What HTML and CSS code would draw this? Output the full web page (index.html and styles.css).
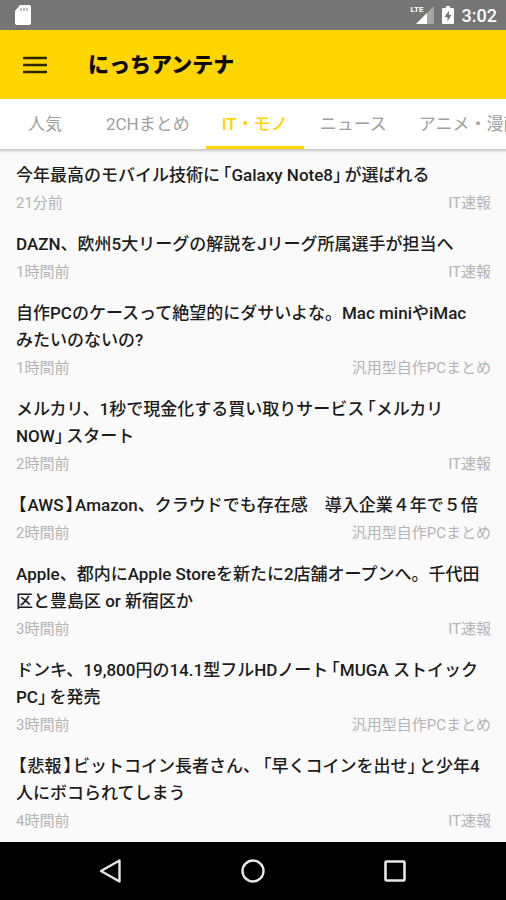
FILE: index.html
```
<!DOCTYPE html>
<html lang="ja">
<head>
  <meta charset="UTF-8" />
  <meta name="viewport" content="width=device-width, initial-scale=1.0"/>
  <title>にっちアンテナ</title>
  <link rel="stylesheet" href="styles.css">
</head>
<body>
  <div class="status-bar">
    <svg class="sd-icon" width="18" height="20" viewBox="0 0 18 20">
      <path d="M6 0h9a2 2 0 0 1 2 2v16a2 2 0 0 1-2 2H3a2 2 0 0 1-2-2V6z" fill="#fff"/>
      <path d="M7 3v3M10 3v3M13 3v3" stroke="#999" stroke-width="1.3"/>
    </svg>
    <div class="status-right">
      <span class="signal">
        <svg width="18" height="18" viewBox="0 0 18 18">
          <path d="M18 0v18H0z" fill="#a6a6a6"/>
          <path d="M11 7v11H0z" fill="#fff"/>
        </svg>
        <span class="lte">LTE</span>
      </span>
      <svg width="12" height="18" viewBox="0 0 12 18">
        <path d="M4 0h4v2h3a1 1 0 0 1 1 1v14a1 1 0 0 1-1 1H1a1 1 0 0 1-1-1V3a1 1 0 0 1 1-1h3z" fill="#fff"/>
        <path d="M7 4.500 2.500 11H5.500V15.500L9.500 9H7z" fill="#757575"/>
      </svg>
      <span class="clock">3:02</span>
    </div>
  </div>

  <header class="app-bar">
    <button type="button" class="menu-btn" aria-label="メニュー">
      <svg width="24" height="18" viewBox="0 0 24 18">
        <path d="M0 2h24M0 9h24M0 16h24" stroke="#2b2500" stroke-width="2.400"/>
      </svg>
    </button>
    <h1>にっちアンテナ</h1>
  </header>

  <nav class="tabs">
    <a href="#popular">人気</a>
    <a href="#2ch">2CHまとめ</a>
    <a href="#it" class="active">IT・モノ</a>
    <a href="#news">ニュース</a>
    <a href="#anime">アニメ・漫画</a>
  </nav>

  <main class="list">
    <article class="item">
      <h2><a href="#1">今年最高のモバイル技術に<span class="open">「</span>Galaxy Note8<span class="close">」</span>が選ばれる</a></h2>
      <div class="meta"><span>21分前</span><span>IT速報</span></div>
    </article>
    <article class="item">
      <h2><a href="#2">DAZN、欧州5大リーグの解説をJリーグ所属選手が担当へ</a></h2>
      <div class="meta"><span>1時間前</span><span>IT速報</span></div>
    </article>
    <article class="item">
      <h2><a href="#3">自作PCのケースって絶望的にダサいよな。Mac miniやiMac<br>みたいのないの?</a></h2>
      <div class="meta"><span>1時間前</span><span>汎用型自作PCまとめ</span></div>
    </article>
    <article class="item">
      <h2><a href="#4">メルカリ、1秒で現金化する買い取りサービス<span class="open">「</span>メルカリ<br>NOW<span class="close">」</span>スタート</a></h2>
      <div class="meta"><span>2時間前</span><span>IT速報</span></div>
    </article>
    <article class="item">
      <h2><a href="#5"><span class="lenticular">【</span>AWS<span class="lenticular">】</span>Amazon、クラウドでも存在感　導入企業４年で５倍</a></h2>
      <div class="meta"><span>2時間前</span><span>汎用型自作PCまとめ</span></div>
    </article>
    <article class="item">
      <h2><a href="#6">Apple、都内にApple Storeを新たに2店舗オープンへ。千代田<br>区と豊島区 or 新宿区か</a></h2>
      <div class="meta"><span>3時間前</span><span>IT速報</span></div>
    </article>
    <article class="item">
      <h2><a href="#7">ドンキ、19,800円の14.1型フルHDノート<span class="open">「</span>MUGA ストイック<br>PC<span class="close">」</span>を発売</a></h2>
      <div class="meta"><span>3時間前</span><span>汎用型自作PCまとめ</span></div>
    </article>
    <article class="item">
      <h2><a href="#8"><span class="lenticular">【</span>悲報<span class="lenticular">】</span>ビットコイン長者さん、<span class="open">「</span>早くコインを出せ<span class="close">」</span>と少年4<br>人にボコられてしまう</a></h2>
      <div class="meta"><span>4時間前</span><span>IT速報</span></div>
    </article>
  </main>

  <footer class="nav-bar">
    <button type="button" aria-label="戻る">
      <svg width="24" height="24" viewBox="0 0 24 24">
        <path d="M20.500 1.500v21L2 12z" fill="none" stroke="#e6e6e6" stroke-width="2.400" stroke-linejoin="round"/>
      </svg>
    </button>
    <button type="button" aria-label="ホーム">
      <svg width="24" height="24" viewBox="0 0 24 24">
        <circle cx="12" cy="12" r="10.500" fill="none" stroke="#e6e6e6" stroke-width="2.400"/>
      </svg>
    </button>
    <button type="button" aria-label="履歴">
      <svg width="24" height="24" viewBox="0 0 24 24">
        <rect x="2.500" y="2.500" width="19" height="19" rx="1" fill="none" stroke="#e6e6e6" stroke-width="2.600"/>
      </svg>
    </button>
  </footer>
</body>
</html>
```
FILE: styles.css
```
:root {
  --primary: #ffd600;
  --status: #757575;
  --bg: #fafafa;
  --text: #1c1c1c;
  --muted: #b4b4b4;
}
* {
  box-sizing: border-box;
}
body {
  margin: 0;
  min-height: 100vh;
  display: flex;
  flex-direction: column;
  background: var(--bg);
  color: var(--text);
  font-family: Roboto, "Noto Sans CJK JP", sans-serif;
  overflow-x: hidden;
}
a {
  color: inherit;
  text-decoration: none;
}
button {
  display: flex;
  padding: 0;
  border: none;
  background: none;
  cursor: pointer;
}
svg {
  display: block;
}

/* status bar */
.status-bar {
  display: flex;
  align-items: center;
  justify-content: space-between;
  height: 30px;
  padding: 0 9px 0 14px;
  background: var(--status);
  color: #fff;
}
.status-right {
  display: flex;
  align-items: center;
  gap: 8px;
}
.signal {
  position: relative;
}
.lte {
  position: absolute;
  top: -1px;
  left: -5px;
  background: var(--status);
  font-size: 8px;
  font-weight: 700;
  line-height: 10px;
}
.clock {
  font-size: 18px;
  font-weight: 500;
}

/* app bar */
.app-bar {
  display: flex;
  align-items: center;
  gap: 41px;
  height: 69px;
  padding: 0 23px;
  background: var(--primary);
}
.app-bar h1 {
  margin: 0;
  color: #0d0b00;
  font-size: 21px;
  font-weight: 900;
  line-height: 30px;
}

/* tabs */
.tabs {
  display: flex;
  height: 50px;
  overflow-x: auto;
  scrollbar-width: none;
  background: #fff;
  color: #a0a0a0;
  font-size: 17px;
  line-height: 50px;
  white-space: nowrap;
}
.tabs a {
  flex: none;
  min-width: 90px;
  padding: 0 16px;
  text-align: center;
}
.tabs .active {
  color: var(--primary);
  font-weight: 500;
  box-shadow: inset 0 -3px var(--primary);
}

/* article list */
.list {
  flex: 1;
  padding: 3px 15px 0 16px;
  background: linear-gradient(#c4c4c4, var(--bg) 4px);
}
.item {
  padding: 10px 0 8px;
}
.item h2 {
  margin: 0 0 4px;
  font-size: 17px;
  font-weight: 500;
  line-height: 27px;
}
.open, .close, .lenticular {
  font-feature-settings: "halt";
}
.open {
  padding-left: 3px;
}
.close {
  padding-right: 3px;
}
.lenticular {
  padding: 0 1px 0 2px;
}
.meta {
  display: flex;
  justify-content: space-between;
  color: var(--muted);
  font-size: 15px;
  line-height: 20px;
}

/* navigation bar */
.nav-bar {
  display: flex;
  align-items: center;
  justify-content: space-around;
  height: 58px;
  padding: 0 40px;
  background: #000;
}
```
